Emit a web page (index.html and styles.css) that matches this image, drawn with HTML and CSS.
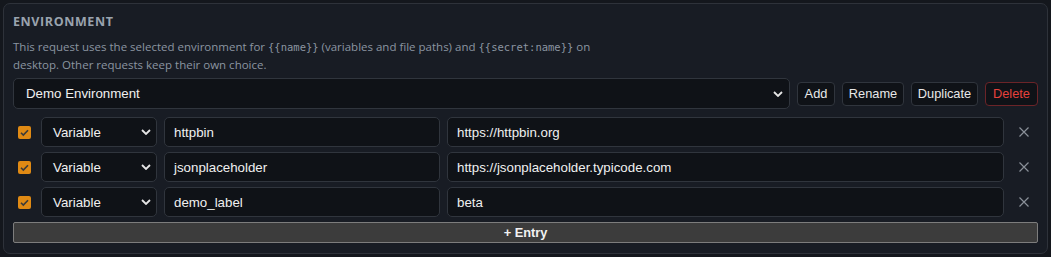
FILE: index.html
```html
<!DOCTYPE html>
<html>
<head>
<meta charset="utf-8">
<link rel="stylesheet" href="styles.css">
</head>
<body>
<section class="panel">
  <h2 class="title">ENVIRONMENT</h2>
  <p class="desc">This request uses the selected environment for <code>{{name}}</code> (variables and file paths) and <code>{{secret:name}}</code> on<br>desktop. Other requests keep their own choice.</p>
  <div class="envbar">
    <div class="select env-select"><span>Demo Environment</span><svg class="chev" viewBox="0 0 10 6" width="10" height="6"><path d="M1 1l4 4 4-4" fill="none" stroke="#e6e6e6" stroke-width="1.8"/></svg></div>
    <button class="btn b-add">Add</button>
    <button class="btn b-ren">Rename</button>
    <button class="btn b-dup">Duplicate</button>
    <button class="btn b-del danger">Delete</button>
  </div>
  <div class="rows">
    <div class="row">
      <span class="check"><svg viewBox="0 0 13 13" width="13" height="13"><path d="M3 6.8l2.3 2.3L10 4.2" fill="none" stroke="#3a3a3a" stroke-width="1.6"/></svg></span>
      <div class="select type"><span>Variable</span><svg class="chev" viewBox="0 0 10 6" width="10" height="6"><path d="M1 1l4 4 4-4" fill="none" stroke="#e6e6e6" stroke-width="1.8"/></svg></div>
      <div class="input key">httpbin</div>
      <div class="input val">https://httpbin.org</div>
      <span class="x"><svg viewBox="0 0 12 12" width="12" height="12"><path d="M1.5 1.5l9 9M10.5 1.5l-9 9" stroke="#8a9099" stroke-width="1.2"/></svg></span>
    </div>
    <div class="row">
      <span class="check"><svg viewBox="0 0 13 13" width="13" height="13"><path d="M3 6.8l2.3 2.3L10 4.2" fill="none" stroke="#3a3a3a" stroke-width="1.6"/></svg></span>
      <div class="select type"><span>Variable</span><svg class="chev" viewBox="0 0 10 6" width="10" height="6"><path d="M1 1l4 4 4-4" fill="none" stroke="#e6e6e6" stroke-width="1.8"/></svg></div>
      <div class="input key">jsonplaceholder</div>
      <div class="input val">https://jsonplaceholder.typicode.com</div>
      <span class="x"><svg viewBox="0 0 12 12" width="12" height="12"><path d="M1.5 1.5l9 9M10.5 1.5l-9 9" stroke="#8a9099" stroke-width="1.2"/></svg></span>
    </div>
    <div class="row">
      <span class="check"><svg viewBox="0 0 13 13" width="13" height="13"><path d="M3 6.8l2.3 2.3L10 4.2" fill="none" stroke="#3a3a3a" stroke-width="1.6"/></svg></span>
      <div class="select type"><span>Variable</span><svg class="chev" viewBox="0 0 10 6" width="10" height="6"><path d="M1 1l4 4 4-4" fill="none" stroke="#e6e6e6" stroke-width="1.8"/></svg></div>
      <div class="input key">demo_label</div>
      <div class="input val">beta</div>
      <span class="x"><svg viewBox="0 0 12 12" width="12" height="12"><path d="M1.5 1.5l9 9M10.5 1.5l-9 9" stroke="#8a9099" stroke-width="1.2"/></svg></span>
    </div>
  </div>
  <button class="add-entry">+ Entry</button>
</section>
</body>
</html>
```
FILE: styles.css
```css
* { box-sizing: border-box; }
html, body { margin: 0; padding: 0; background: #14171d; }
body { padding: 3px; width: 1051px; height: 257px; overflow: hidden; }
.panel {
  width: 1045px;
  height: 251px;
  background: #181c24;
  border: 1px solid #2e323a;
  border-radius: 7px;
  padding: 9px 9px 0 9px;
  font-family: "Open Sans", "Noto Sans", sans-serif;
}
.title {
  margin: 0;
  font-size: 12.5px;
  font-weight: 700;
  letter-spacing: 0.6px;
  color: #9aa3ae;
  line-height: 18px;
}
.desc {
  margin: 7px 0 0 0;
  font-size: 11.5px;
  line-height: 17px;
  color: #8b95a1;
}
.desc code {
  font-family: "DejaVu Sans Mono", monospace;
  font-size: 10.5px;
  color: #8b95a1;
}
.envbar {
  display: flex;
  align-items: center;
  gap: 7px;
  margin-top: 5px;
  height: 31px;
  width: 1025px;
}
.select, .input {
  background: #0f1217;
  border: 1px solid #30353d;
  border-radius: 5px;
  color: #f0f0f0;
  font-family: "Liberation Sans", Arial, sans-serif;
  font-size: 13.3px;
  display: flex;
  align-items: center;
}
.env-select {
  flex: 1;
  height: 31px;
  padding: 0 6px 0 12px;
  justify-content: space-between;
}
.chev { flex: none; }
.btn {
  flex: none;
  height: 24px;
  padding: 0;
  background: #0f1217;
  border: 1px solid #30353d;
  border-radius: 4px;
  color: #e8e8e8;
  font-family: "Liberation Sans", Arial, sans-serif;
  font-size: 12.8px;
}
.b-add { width: 38px; }
.b-ren { width: 62px; }
.b-dup { width: 67px; }
.b-del { width: 53px; }
.btn.danger { color: #e5413c; border-color: #6b2428; }
.rows {
  margin-top: 8px;
  display: flex;
  flex-direction: column;
  gap: 5px;
}
.row {
  display: flex;
  align-items: center;
  height: 30px;
  gap: 7px;
}
.check {
  flex: none;
  width: 13px;
  height: 13px;
  background: #e08a14;
  border-radius: 2px;
  margin-left: 5px;
  margin-right: 3px;
  display: flex;
}
.type {
  flex: none;
  width: 116px;
  height: 30px;
  padding: 0 5px 0 11px;
  justify-content: space-between;
}
.key { flex: none; width: 276px; height: 30px; padding: 0 9px; }
.val { flex: none; width: 557px; height: 30px; padding: 0 9px; }
.x { flex: none; width: 12px; height: 12px; margin-left: 7px; display: flex; }
.add-entry {
  display: block;
  margin-top: 5px;
  width: 1025px;
  height: 21px;
  background: #3c3c3c;
  border: 1px solid #7d7d7d;
  border-radius: 2px;
  color: #f2f2f2;
  font-family: "Liberation Sans", Arial, sans-serif;
  font-size: 12.8px;
  font-weight: 700;
  padding: 0;
}
```
